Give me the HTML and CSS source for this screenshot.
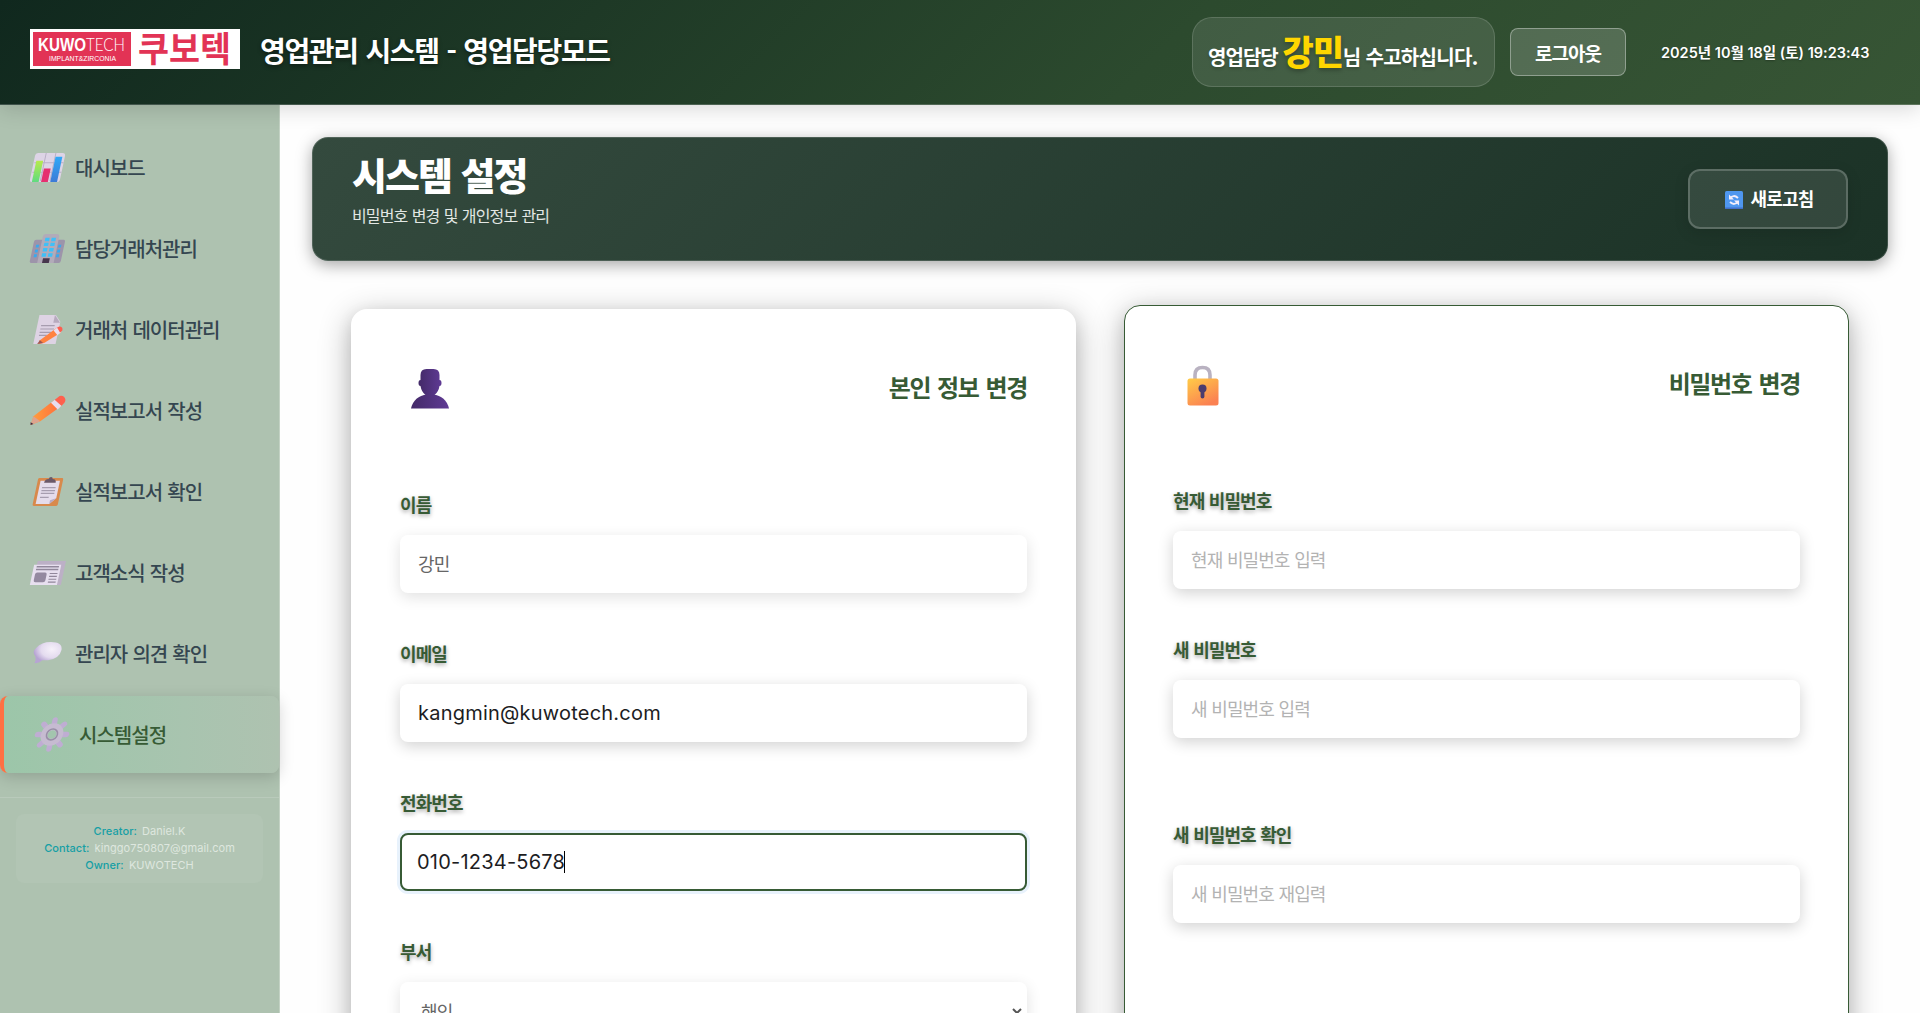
FILE: index.html
```html
<!DOCTYPE html>
<html lang="ko">
<head>
<meta charset="utf-8">
<title>영업관리 시스템 - 시스템 설정</title>
<link rel="stylesheet" href="styles.css">
</head>
<body>
<header class="topbar">
  <div class="brand">
    <div class="logo">
      <div class="logo-badge">
        <svg class="logo-name" viewBox="0 0 98 34"><text x="5" y="19" textLength="48" lengthAdjust="spacingAndGlyphs" class="logo-bold">KUWO</text><text x="53" y="19" textLength="39" lengthAdjust="spacingAndGlyphs" class="logo-thin">TECH</text><text x="16" y="28.5" textLength="67" lengthAdjust="spacingAndGlyphs" class="logo-sub">IMPLANT&amp;ZIRCONIA</text></svg>
      </div>
      <svg class="logo-kr" viewBox="0 0 93 38"><text x="0" y="32" textLength="93" lengthAdjust="spacingAndGlyphs">쿠보텍</text></svg>
    </div>
    <h1 class="system-title">영업관리 시스템 - 영업담당모드</h1>
  </div>
  <div class="account">
    <div class="welcome"><span class="w-role">영업담당</span> <strong>강민</strong><span class="w-msg">님 수고하십니다.</span></div>
    <button class="logout">로그아웃</button>
    <time class="clock">2025년 10월 18일 (토) 19:23:43</time>
  </div>
</header>
<div class="shell">
  <aside class="sidebar">
    <nav class="menu">
      <a class="item"><svg class="ico" viewBox="0 0 32 32"><g transform="skewX(-12) translate(3.4 0)"><rect x="0" y="1" width="31" height="30" rx="3" fill="#ddd4e6"/><path d="M11 1v29M21 1v29M1 11h30M1 21h30" stroke="#b9afc6" stroke-width="1"/><rect x="2.500" y="9" width="7" height="22" fill="url(#gGreen)"/><rect x="12" y="17" width="7" height="14" fill="#e5306f"/><rect x="21.500" y="5" width="7" height="26" fill="url(#gBlue)"/></g></svg><span>대시보드</span></a>
      <a class="item"><svg class="ico" viewBox="0 0 32 32"><g transform="skewX(-12) translate(3.400 0)"><rect x="0" y="7" width="32" height="24" rx="2" fill="#9d94aa"/><path d="M3 12h3v3H3zM3 17h3v3H3zM3 22h3v3H3zM26 12h3v3h-3zM26 17h3v3h-3zM26 22h3v3h-3z" fill="#39a9ee"/><path d="M8 31V4q0-3 3-3h11q3 0 3 3v27z" fill="#b2abb9"/><path d="M11 5h4.500v3.500H11zM17.500 5H22v3.500h-4.500zM11 10h4.500v3.500H11zM17.500 10H22v3.500h-4.500zM11 15.500h4.500V19H11zM17.500 15.500H22V19h-4.500zM11 21h4.500v3.500H11zM17.500 21H22v3.500h-4.500z" fill="#3fc0f8"/><path d="M13 26h7v5h-7z" fill="#47364d"/></g></svg><span>담당거래처관리</span></a>
      <a class="item"><svg class="ico" viewBox="0 0 32 32"><g transform="skewX(-12) translate(3.400 0)"><path d="M4 1h17l6 7v23H4z" fill="#ded3e4"/><path d="M20 1l7 8h-7z" fill="#b7aabe"/><path d="M8 12h14M8 15.500h14M8 19h12M8 22h8" stroke="#a79daf" stroke-width="1.200"/><path d="M10 27L25 14l5 5-15 11-6 1z" fill="#ff8240"/><path d="M22 17l3-3 5 5-3 3z" fill="#eadff0"/><path d="M25 14l2-1q4 0 4 4l-2 2z" fill="#ff5d50"/><path d="M10 27l-2 4 6-1z" fill="#9b5754"/></g></svg><span>거래처 데이터관리</span></a>
      <a class="item"><svg class="ico" viewBox="0 0 36 32"><path d="M0 31l3-9L25 5l7 6-22 16z" fill="url(#gOrange)"/><path d="M21 8l4-3 7 6-4 4z" fill="#e7dced"/><path d="M25 5l5-4q5-1 6 4 0 3-4 6z" fill="#ff604d"/><path d="M0 31l3-9 7 5z" fill="#dca38f"/><path d="M0 31v-3l3 2z" fill="#412c40"/></svg><span>실적보고서 작성</span></a>
      <a class="item"><svg class="ico" viewBox="0 0 32 32"><g transform="skewX(-12) translate(3.400 0)"><rect x="3" y="2" width="26" height="29" rx="1.500" fill="#d8894c"/><path d="M6 5h20v18l-6 6H6z" fill="#e5dceb"/><path d="M20 29v-4l6-2z" fill="#b8a9c5"/><path d="M9 12h14M9 15h14M9 18h14M9 22h9" stroke="#a79daf" stroke-width="1.300"/><path d="M10 7q0-4 4-4 0-2 2-2t2 2q4 0 4 4z" fill="#6b5969"/></g></svg><span>실적보고서 확인</span></a>
      <a class="item"><svg class="ico" viewBox="0 0 32 32"><g transform="skewX(-12) translate(3.400 1)"><path d="M3 3h29v25H1z" fill="#bcb0c6"/><path d="M0 7h28v21H0z" fill="#e7dfef"/><path d="M3 9h23M3 12h23" stroke="#91879b" stroke-width="1.500"/><rect x="3" y="15" width="12" height="10" rx="2" fill="#9489a0"/><path d="M18 16h8M18 19h8M18 22h8M18 25h8" stroke="#91879b" stroke-width="1.200"/></g></svg><span>고객소식 작성</span></a>
      <a class="item"><svg class="ico" viewBox="0 0 32 32"><path d="M3 19q-4-5 1-9Q9 4 19 4q12 0 11 8-2 9-14 11-4 0-6 0-3 3-8 3 2-3 1-7z" fill="url(#gBubble)"/></svg><span>관리자 의견 확인</span></a>
      <a class="item active"><svg class="ico" viewBox="0 0 32 32"><g transform="skewX(-12) translate(3.400 0)" fill="none"><path d="M16 1v30M1 16h30M5.400 5.400l21.200 21.200M26.600 5.400L5.400 26.600" stroke="#bfadd3" stroke-width="5.500" stroke-linecap="round"/><circle cx="16" cy="16" r="8" fill="#a3c5ae" stroke="#c6bbd1" stroke-width="7"/><circle cx="16" cy="16" r="5.600" stroke="#988fa6" stroke-width="1.600"/></g></svg><span>시스템설정</span></a>
    </nav>
    <div class="credits-wrap">
      <div class="credits">
        <p><b>Creator:</b> <span>Daniel.K</span></p>
        <p><b>Contact:</b> <span>kinggo750807@gmail.com</span></p>
        <p><b>Owner:</b> <span>KUWOTECH</span></p>
      </div>
    </div>
  </aside>
  <main class="content">
    <section class="banner">
      <div class="banner-text">
        <h2>시스템 설정</h2>
        <p>비밀번호 변경 및 개인정보 관리</p>
      </div>
      <button class="refresh"><svg class="refresh-ico" viewBox="0 0 18 18"><rect width="18" height="18" rx="1.500" fill="#4f97ef"/><path d="M0 16.500h18V17q0 1-1 1H1q-1 0-1-1z" fill="#416fc9"/><path d="M5 7.500q3.500-4.500 8-.5M13 10.500q-3.500 4.500-8 .5" fill="none" stroke="#f3eefb" stroke-width="2"/><path d="M4 3.500v5h5zM14 14.500v-5H9z" fill="#f3eefb"/></svg><span>새로고침</span></button>
    </section>
    <section class="cards">
      <form class="card">
        <div class="card-head">
          <svg class="card-ico" viewBox="0 0 40 42"><path d="M10.500 7q0-6 6-6h7q6 0 6 6v5q2 0 2 3t-2 3q-1 6-5 9h-9q-4-3-5-9-2 0-2-3t2-3z" fill="url(#gUser)"/><path d="M1 40.500Q4 28 17 26.500h6Q36 28 39 40.500z" fill="url(#gUser)"/></svg>
          <h3>본인 정보 변경</h3>
        </div>
        <div class="field"><label>이름</label><div class="box muted-box">강민</div></div>
        <div class="field"><label>이메일</label><div class="box latin mail"><span>kangmin@kuwotech.com</span></div></div>
        <div class="field"><label>전화번호</label><div class="box latin phone focused"><span>010-1234-5678</span><i class="caret"></i></div></div>
        <div class="field"><label>부서</label><div class="box select"><span>해인</span><svg class="chev" viewBox="0 0 10 6"><path d="M1 1l4 4 4-4" fill="none" stroke="#555" stroke-width="2"/></svg></div></div>
      </form>
      <form class="card hovered">
        <div class="card-head">
          <svg class="card-ico" viewBox="0 0 40 42"><path d="M12 16v-5q0-7.500 7.500-7.500T27 11v5" fill="none" stroke="#b9b2c1" stroke-width="3.600"/><rect x="4.500" y="14.500" width="31" height="27" rx="2.500" fill="url(#gLock)"/><circle cx="19.500" cy="24.500" r="4" fill="#4c3c6e"/><path d="M19.500 25.500v7" stroke="#4c3c6e" stroke-width="3.800" stroke-linecap="round"/></svg>
          <h3>비밀번호 변경</h3>
        </div>
        <div class="field"><label>현재 비밀번호</label><div class="box hint">현재 비밀번호 입력</div></div>
        <div class="field tall"><label>새 비밀번호</label><div class="box hint">새 비밀번호 입력</div></div>
        <div class="field"><label>새 비밀번호 확인</label><div class="box hint">새 비밀번호 재입력</div></div>
      </form>
    </section>
  </main>
</div>
<svg class="defs" width="0" height="0">
  <linearGradient id="gGreen" x2="0" y2="1"><stop stop-color="#b7ea4c"/><stop offset="1" stop-color="#5fdb80"/></linearGradient>
  <linearGradient id="gBlue" x2="0" y2="1"><stop stop-color="#30a8f8"/><stop offset="1" stop-color="#3c7bd6"/></linearGradient>
  <linearGradient id="gOrange"><stop stop-color="#ffa13c"/><stop offset="1" stop-color="#ff6a3d"/></linearGradient>
  <radialGradient id="gBubble" cx=".65" cy=".35" r=".65"><stop stop-color="#f6f1fa"/><stop offset=".6" stop-color="#e4dbef"/><stop offset="1" stop-color="#b7a4d3"/></radialGradient>
  <linearGradient id="gUser"><stop stop-color="#432a68"/><stop offset="1" stop-color="#5f3a94"/></linearGradient>
  <linearGradient id="gLock" x2=".6" y2="1"><stop stop-color="#ffcc47"/><stop offset="1" stop-color="#fb8152"/></linearGradient>
</svg>
</body>
</html>
```

FILE: styles.css
```css
* { box-sizing: border-box; }
body { margin: 0; height: 1013px; overflow: hidden; background: #fefefe; display: flex; flex-direction: column; font-family: "Noto Sans CJK KR", sans-serif; color: #222; }
h1, h2, h3, p { margin: 0; }
button { font-family: inherit; color: #fff; }
.defs { position: absolute; }

.topbar { position: relative; z-index: 2; flex: none; height: 105px; padding: 0 50px 0 30px; display: flex; align-items: center; justify-content: space-between; background: linear-gradient(135deg, #10281e 0%, #2c4a2e 60%, #375535 100%); border-bottom: 1px solid rgba(255,255,255,.2); box-shadow: 0 4px 20px rgba(0,0,0,.15); }
.brand { display: flex; align-items: center; gap: 20px; margin-top: -6px; }
.logo { width: 210px; height: 40px; background: #fff; display: flex; align-items: center; padding: 0 9px 0 3px; justify-content: space-between; }
.logo-badge { width: 98px; height: 34px; background: #e23355; }
.logo-name { display: block; width: 98px; height: 34px; fill: #fff; font-family: "Liberation Sans", sans-serif; }
.logo-bold { font-size: 18px; font-weight: 700; }
.logo-thin { font-size: 18px; font-family: Lato, sans-serif; font-weight: 300; }
.logo-sub { font-size: 7px; }
.logo-kr { width: 93px; height: 38px; overflow: visible; fill: #e23355; font-size: 35px; font-weight: 700; }
.system-title { color: #fff; font-size: 28px; line-height: 44px; padding-top: 2px; font-weight: 700; letter-spacing: -1.35px; word-spacing: 1.3px; text-shadow: 0 2px 4px rgba(0,0,0,.4); white-space: nowrap; }
.account { display: flex; align-items: center; }
.welcome { width: 303px; height: 70px; padding: 0 0 0 15px; border: 1px solid rgba(255,255,255,.14); border-radius: 20px; background: rgba(255,255,255,.1); color: #fff; font-size: 20px; font-weight: 700; line-height: 65px; white-space: nowrap; letter-spacing: -.95px; text-shadow: 0 2px 3px rgba(0,0,0,.2); }
.welcome strong { color: #ffd600; font-size: 34px; font-weight: 900; letter-spacing: -1.1px; text-shadow: 0 2px 4px rgba(0,0,0,.3); }
.w-msg { letter-spacing: -.7px; }
.logout { margin-left: 15px; width: 116px; height: 48px; padding: 0; border: 1px solid rgba(255,255,255,.35); border-radius: 8px; background: rgba(255,255,255,.17); font-size: 19px; letter-spacing: -.95px; font-weight: 700; }
.clock { margin: 0 0 2px 35px; width: 209px; color: #fff; font-family: Inter, "Noto Sans CJK KR", sans-serif; font-size: 14.5px; font-weight: 600; letter-spacing: 0; white-space: nowrap; text-shadow: 0 1px 2px rgba(0,0,0,.3); }

.shell { flex: 1; min-height: 0; display: flex; }
.sidebar { flex: none; width: 280px; background: #aec2b0; border-right: 1px solid #c3d2c4; }
.menu { padding-top: 24px; display: flex; flex-direction: column; gap: 4px; }
.item { height: 77px; padding-left: 30px; display: flex; align-items: center; gap: 9px; font-size: 20px; font-weight: 500; letter-spacing: -.98px; word-spacing: .5px; color: #354650; }
.ico { width: 36px; height: 31px; overflow: visible; }
.item.active { border-left: 4px solid #ff7043; border-radius: 8px; color: #375b35; background: linear-gradient(90deg, #9cc6a9, #a8c4af 65%, #aec2b0); box-shadow: 0 4px 15px rgba(0,0,0,.17); }
.credits-wrap { margin-top: 24px; padding: 16px; border-top: 1px solid #b9cabb; }
.credits { height: 69px; border-radius: 8px; background: rgba(255,255,255,.05); display: flex; flex-direction: column; justify-content: center; font-family: Inter, sans-serif; font-size: 11px; letter-spacing: .06px; text-align: center; color: #dee7df; }
.credits p { line-height: 17px; }
.credits b { font-weight: 500; color: #169fa5; margin-right: 2px; }

.content { flex: 1; padding: 32px 32px 0; }
.banner { height: 124px; padding: 0 39px; display: flex; align-items: center; justify-content: space-between; border: 1px solid rgba(255,255,255,.15); border-radius: 16px; background: linear-gradient(135deg, #344a3e, #1b3226); background-origin: border-box; box-shadow: 0 4px 16px rgba(0,0,0,.35); }
.banner-text { align-self: flex-start; padding-top: 11px; color: #fff; }
.banner h2 { font-size: 38px; font-weight: 900; line-height: 50px; letter-spacing: -2px; word-spacing: 1px; }
.banner p { font-size: 16px; line-height: 24px; margin-top: 4px; color: #e2e7e4; letter-spacing: -.85px; word-spacing: .6px; }
.refresh { width: 160px; height: 60px; padding: 0 6px 2px 9px; display: flex; align-items: center; justify-content: center; gap: 7px; border: 2px solid rgba(255,255,255,.2); border-radius: 12px; background: rgba(255,255,255,.1); font-size: 18px; letter-spacing: -.8px; font-weight: 700; box-shadow: 0 4px 15px rgba(0,0,0,.12); }
.refresh-ico { width: 18px; height: 18px; margin-top: 4px; }

.cards { display: grid; grid-template-columns: 725px 725px; gap: 48px; padding: 48px 39px 0; }
.card { height: 900px; padding: 49px; border-radius: 16px; background: #fff; box-shadow: 0 8px 32px rgba(0,0,0,.3), 0 4px 16px rgba(0,0,0,.08); }
.card.hovered { margin-top: -4px; padding: 48px; border: 1px solid #375b35; }
.card-head { height: 62px; display: flex; align-items: center; justify-content: space-between; }
.card-ico { width: 40px; height: 42px; margin-left: 10px; }
.card h3 { margin: 0 0 6px; font-size: 24px; font-weight: 700; letter-spacing: -1.35px; word-spacing: 1.6px; color: #375b35; }
.field { height: 149px; }
.field:nth-of-type(2) { margin-top: 72px; }
.field.tall { height: 185px; }
.field label { display: block; height: 43px; line-height: 24px; font-size: 18px; letter-spacing: -.93px; word-spacing: .4px; font-weight: 700; color: #375b35; text-shadow: 0 2px 4px rgba(0,0,0,.35); }
.box { height: 58px; padding: 0 18px 2px; display: flex; align-items: center; border-radius: 8px; background: #fff; font-size: 18px; letter-spacing: -.93px; word-spacing: .6px; box-shadow: 0 4px 15px rgba(0,0,0,.18); }
.box.hint { color: #b3b3b3; }
.muted-box, .select { color: #666; box-shadow: 0 4px 15px rgba(0,0,0,.12); }
.latin { padding: 0 18px; font-family: Inter, sans-serif; font-size: 20px; letter-spacing: .22px; color: #1d1d1f; }
.focused { border: 2px solid #375b35; padding: 0 15px; box-shadow: 0 0 0 3px #e8f2fc; }
.caret { width: 1px; height: 22px; margin-left: -1px; background: #000; }
.select { padding: 0 5px 0 21px; justify-content: space-between; }
.chev { width: 10px; height: 6px; }
```
